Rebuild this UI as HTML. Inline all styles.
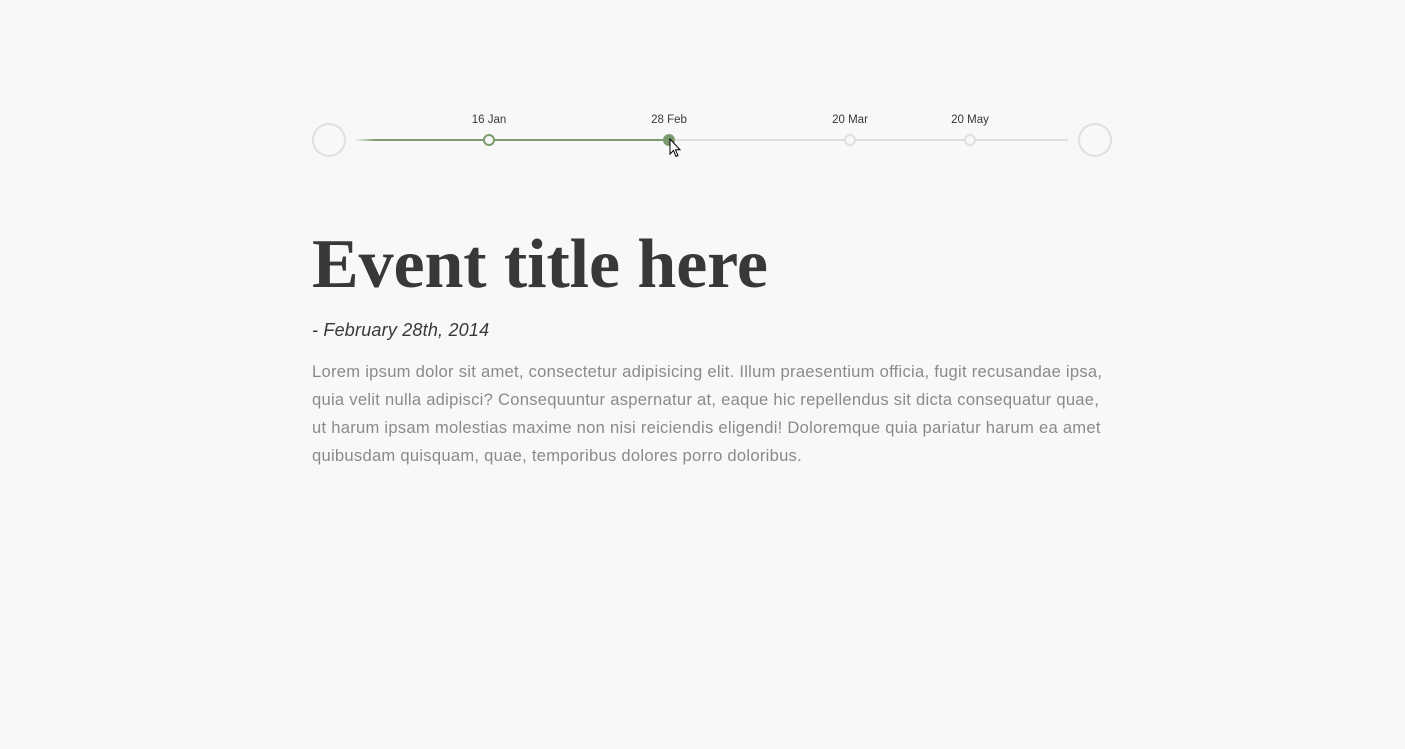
<!DOCTYPE html>
<html><head><style>
body{margin:0;background:#f8f8f8;width:1405px;height:749px;overflow:hidden;position:relative;font-family:"Liberation Sans",sans-serif}
.c{position:absolute;width:30px;height:30px;border:2px solid #dfdfdf;border-radius:50%;top:123px}
.line{position:absolute;top:139px;height:2px}
.dot{position:absolute;top:134px;width:8px;height:8px;border-radius:50%;border:2px solid #dfdfdf;background:#f8f8f8}
.lbl{position:absolute;top:114px;font-size:11.5px;color:#383838;transform:translateX(-50%)}
h1{position:absolute;left:312px;top:225px;margin:0;font:bold 70px "Liberation Serif",serif;color:#383838;letter-spacing:-0.1px}
.date{position:absolute;left:312px;top:320px;font-style:italic;font-size:18px;color:#383838;letter-spacing:0.2px}
p{position:absolute;left:312px;top:358px;width:800px;margin:0;font-size:16.6px;line-height:28px;color:#8a8a8a;letter-spacing:0.26px}
</style></head><body>
<div class="c" style="left:312px"></div>
<div class="c" style="left:1078px"></div>
<div class="line" style="left:355px;width:713px;background:#dfdfdf"></div>
<div class="line" style="left:355px;width:314px;background:linear-gradient(90deg,#f8f8f8,#7b9a6d 20px)"></div>
<div class="dot" style="left:483px;border-color:#7b9a6d"></div>
<div class="dot" style="left:663px;border-color:#7b9a6d;background:#7b9a6d"></div>
<div class="dot" style="left:844px"></div>
<div class="dot" style="left:964px"></div>
<div class="lbl" style="left:489px">16 Jan</div>
<div class="lbl" style="left:669px">28 Feb</div>
<div class="lbl" style="left:850px">20 Mar</div>
<div class="lbl" style="left:970px">20 May</div>
<svg style="position:absolute;left:669px;top:138px" width="14" height="22" viewBox="0 0 14 22"><path d="M1 1 L1 16 L4.5 12.5 L7 18.5 L9 17.5 L6.5 11.8 L11 11.8 Z" fill="#fff" stroke="#000" stroke-width="1"/></svg>
<h1>Event title here</h1>
<div class="date">- February 28th, 2014</div>
<p>Lorem ipsum dolor sit amet, consectetur adipisicing elit. Illum praesentium officia, fugit recusandae ipsa, quia velit nulla adipisci? Consequuntur aspernatur at, eaque hic repellendus sit dicta consequatur quae, ut harum ipsam molestias maxime non nisi reiciendis eligendi! Doloremque quia pariatur harum ea amet quibusdam quisquam, quae, temporibus dolores porro doloribus.</p>
</body></html>
